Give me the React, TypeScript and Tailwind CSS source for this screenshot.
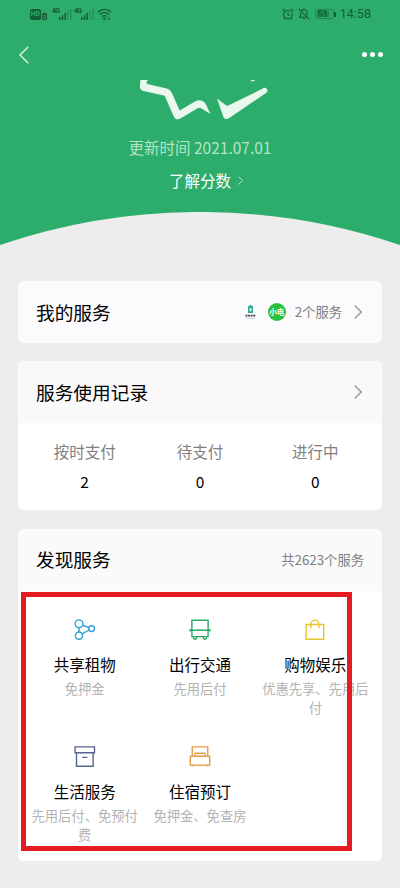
import type { ReactNode } from "react";

interface Service {
    title: string;
    desc: string;
    icon: ReactNode;
}

const RECORDS = [
    { label: "按时支付", value: 2 },
    { label: "待支付", value: 0 },
    { label: "进行中", value: 0 },
];

const SERVICES: Service[] = [
    {
        title: "共享租物",
        desc: "免押金",
        icon: (
            <svg className="w-6 h-6" viewBox="0 0 24 24" fill="none" stroke="#2f9fd8" strokeWidth="1.4">
                <circle cx="6" cy="6.8" r="3.9" />
                <circle cx="6" cy="18.6" r="3.6" />
                <circle cx="18.6" cy="11.6" r="2.9" />
                <path d="M6 10.7V15M9.6 8.3l6.3 2.2M9.1 16.8l7-3.8" />
            </svg>
        ),
    },
    {
        title: "出行交通",
        desc: "先用后付",
        icon: (
            <svg className="w-6 h-6" viewBox="0 0 24 24" fill="none" stroke="#2aa866" strokeWidth="1.4">
                <path d="M3.9 3.2h16.2v16.4H3.9zM2 13.2h20M2.2 12v2.4M21.8 12v2.4" />
                <path d="M5.4 19.6v1a1.7 1.7 0 0 0 3.4 0v-1M15.2 19.6v1a1.7 1.7 0 0 0 3.4 0v-1" />
            </svg>
        ),
    },
    {
        title: "购物娱乐",
        desc: "优惠先享、先用后付",
        icon: (
            <svg className="w-6 h-6" viewBox="0 0 24 24" fill="none" stroke="#e8c52e" strokeWidth="1.4">
                <path d="M3.1 7.5h17.6v14.7H3.1zM7.9 11.2V7.1a4 4 0 0 1 8 0v4.1" />
            </svg>
        ),
    },
    {
        title: "生活服务",
        desc: "先用后付、免预付费",
        icon: (
            <svg className="w-6 h-6" viewBox="0 0 24 24" fill="none" stroke="#56648f" strokeWidth="1.4">
                <path d="M2.1 2.9h19.4v5.8H2.1zM3.5 8.7h16.6v13.6H3.5zM9.3 13.4h5" />
            </svg>
        ),
    },
    {
        title: "住宿预订",
        desc: "免押金、免查房",
        icon: (
            <svg className="w-6 h-6" viewBox="0 0 24 24" fill="none" stroke="#e3a04e" strokeWidth="1.4">
                <path d="M4.3 12.2V2.9h15.4v9.3M2.3 12.2h19.4v9H2.3zM7 12.2V9.3h10v2.9M4.4 21.2v1.4M19.6 21.2v1.4" />
            </svg>
        ),
    },
];

function Signal() {
    return (
        <div className="flex items-start">
            <span className="-mt-px w-[7px] text-[7px] leading-[8px] font-bold tracking-[-0.8px] font-['Roboto',sans-serif]">4G</span>
            <svg className="w-[13px] h-[12px]" viewBox="0 0 13 12" fill="currentColor">
                <path d="M0 9h1.5v3H0zM2.7 7.2h1.5V12H2.7zM5.4 5h1.5v7H5.4z" />
                <path d="M8.3 2.8h1.4V12H8.3zM11.2 1h1.4v11h-1.4z" opacity=".35" />
            </svg>
        </div>
    );
}

function StatusBar() {
    return (
        <div className="h-7 pl-[30px] pr-[29px] flex items-center justify-between text-[#145e38]">
            <div className="flex items-center">
                <span className="w-[11px] h-[11px] rounded-[2px] bg-[#145e38] text-[#2dad6b] text-[7px] leading-[11px] font-bold text-center font-['Roboto',sans-serif]">
                    HD
                </span>
                <span className="ml-px mt-1 w-[5px] h-[7px] rounded-[1px] bg-[#145e38] text-[#2dad6b] text-[6px] leading-[7px] font-bold text-center font-['Roboto',sans-serif]">
                    2
                </span>
                <div className="ml-[5px] flex gap-[2px]">
                    <Signal />
                    <Signal />
                </div>
                <svg className="ml-[3px] w-[15px] h-3" viewBox="0 0 15 12" fill="none" stroke="currentColor" strokeWidth="1.3">
                    <path d="M.8 4.2a9.5 9.5 0 0 1 13.4 0M2.9 6.5a6.5 6.5 0 0 1 9.2 0M5 8.7a3.5 3.5 0 0 1 5 0" />
                    <circle cx="7.3" cy="10.7" r=".6" fill="currentColor" />
                    <path d="M12 9v2.5M10.8 10.5 12 11.7l1.2-1.2" strokeWidth=".8" />
                </svg>
            </div>
            <div className="flex items-center">
                <svg className="w-3 h-3" viewBox="0 0 12 12" fill="none" stroke="currentColor" strokeWidth="1.1">
                    <circle cx="6" cy="6.6" r="4.3" />
                    <path d="M6 4.2v2.6l1.8 1M.6 2.7 2.8.9M11.4 2.7 9.2.9M2.9 10l-1.1 1.4M9.1 10l1.1 1.4" />
                </svg>
                <svg className="ml-1 w-3 h-3" viewBox="0 0 12 12" fill="none" stroke="currentColor" strokeWidth="1.1">
                    <path d="M3.5 2.8A3 3 0 0 1 9 4.2v3.2M2.6 4.4v3.3L1.5 9.2h7.7M6 .4v.9M5 10.8h2M.8.8l10.4 10.6" />
                </svg>
                <div className="ml-[5px] w-[19px] h-[10px] rounded-[3px] border border-[#22864f] p-px flex">
                    <span className="w-3 h-[6px] bg-[#22864f] text-[9px] leading-[6px] text-center font-bold font-['Roboto',sans-serif] text-[#145e38]">
                        51
                    </span>
                </div>
                <span className="w-[2px] h-[5px] bg-[#145e38]" />
                <span className="ml-1 text-[12.6px] leading-none font-['Roboto',sans-serif]">14:58</span>
            </div>
        </div>
    );
}

function Chevron({ className }: { className: string }) {
    return (
        <svg className={className} viewBox="0 0 8 14" fill="none" stroke="currentColor" strokeWidth="1.4">
            <path d="M.7.5 7.2 7 .7 13.5" />
        </svg>
    );
}

function Header() {
    return (
        <header className="h-[245px] flex flex-col bg-[#2dad6b]">
            <StatusBar />
            <nav className="h-[52px] pl-[19px] pr-[17px] flex items-center justify-between text-white">
                <svg className="mt-px w-[10px] h-[18px]" viewBox="0 0 10 18" fill="none" stroke="#e2f5ea" strokeWidth="1.4">
                    <path d="M9.3.7 1 9l8.3 8.3" />
                </svg>
                <div className="mt-px flex gap-[3px]">
                    <span className="w-[5px] h-[5px] rounded-full bg-white" />
                    <span className="w-[5px] h-[5px] rounded-full bg-white" />
                    <span className="w-[5px] h-[5px] rounded-full bg-white" />
                </div>
            </nav>
            {/* Lower half of the score digits */}
            <svg className="h-[40px] w-[130px] ml-[139px]" viewBox="0 0 130 40" fill="#e9f7ef">
                <path d="M1.5 0h7.8C7.6 1.2 7 3 8.2 4L27.6 8.4c2.6.7 4.1 2 5.1 4.2l8 18L57.2 20.8c3.6-1.6 8.4.2 9.8 3.6l4.4 9.6-8.8-5.6c-1.3-.8-2.6-.8-4-.1L41.4 38.6c-2.8 1.5-5.4.7-6.6-2.2L25.7 15.8 4.4 11C1.7 10.3.6 8.2.9 5.4z" />
                <path d="M78 18.4 86.6 25c1.1.8 2 .9 3.2.3L124.7 8.1c3-1.3 5.1 2.9 2.6 4.7L89.9 38.3c-2.2 1.4-4.4 1-5.5-1.2z" />
                <path d="M111.3 1.6 112.8 0h3.4L115 1z" />
            </svg>
            <p className="mt-4 text-center text-[15.5px] leading-[22px] text-[#b4e3c9]">更新时间 2021.07.01</p>
            <div className="mt-[11px] pl-[12px] flex items-center justify-center gap-[7px] text-[15.5px] leading-[22px] text-white">
                了解分数
                <Chevron className="w-[5px] h-[9px] text-[#c4e9d4]" />
            </div>
            <svg className="mt-auto w-[400px] h-[33px] block shrink-0" viewBox="0 0 400 33" fill="#ededed">
                <path d="M0 33A622 622 0 0 1 400 33z" />
            </svg>
        </header>
    );
}

export default function App() {
    return (
        <div className="w-[400px] h-[888px] overflow-hidden bg-[#ededed] font-['Noto_Sans_CJK_SC',sans-serif] font-normal text-black">
            <Header />
            <main className="px-[18px] pt-9 flex flex-col">
                {/* My services */}
                <section className="h-[62px] rounded-[6px] bg-[#fbfafd] pl-[18px] pr-5 flex items-center">
                    <h2 className="text-[18.7px] leading-7">我的服务</h2>
                    <div className="ml-auto flex items-center">
                        <svg className="w-[11px] h-[14px]" viewBox="0 0 11 14">
                            <path d="M3 1.2h1.3V0h2.4v1.2H8V8H3z" fill="#31a797" />
                            <path d="M4.5 3h2v3.2h-2z" fill="#d6efeb" />
                            <path d="M.5 10.7h10" stroke="#444" strokeWidth="1.8" strokeDasharray="2 .6" />
                            <path d="M1 13.2h9" stroke="#aaa" strokeWidth=".6" />
                        </svg>
                        <span className="ml-3 w-[18px] h-[18px] rounded-full bg-[#27c13d] text-white text-[7.5px] leading-[18px] font-bold text-center whitespace-nowrap">
                            小电
                        </span>
                        <span className="ml-[9px] text-[13.3px] leading-5 text-[#808080]">2个服务</span>
                        <Chevron className="ml-3 w-2 h-[14px] text-[#999]" />
                    </div>
                </section>

                {/* Usage records */}
                <section className="mt-[18px] h-[149px] rounded-[6px] bg-white overflow-hidden">
                    <div className="h-[62px] bg-[#f9f9f9] pl-[18px] pr-5 flex items-center justify-between">
                        <h2 className="text-[18.7px] leading-7">服务使用记录</h2>
                        <Chevron className="w-2 h-[14px] text-[#999]" />
                    </div>
                    <div className="px-[9px] pt-[17px] grid grid-cols-3 text-center">
                        {RECORDS.map((item) => (
                            <div key={item.label}>
                                <p className="text-[15.5px] leading-[22px] text-[#808080]">{item.label}</p>
                                <p className="mt-2 text-[15.5px] leading-[22px]">{item.value}</p>
                            </div>
                        ))}
                    </div>
                </section>

                {/* Discover */}
                <section className="relative mt-[19px] h-[332px] rounded-[6px] bg-white">
                    <div className="h-[62px] rounded-t-[6px] bg-[#fafafa] px-[18px] flex items-center justify-between">
                        <h2 className="pb-[2px] text-[18.7px] leading-7">发现服务</h2>
                        <span className="text-[13.3px] leading-5 text-[#808080]">共2623个服务</span>
                    </div>
                    <div className="px-[9px] pt-[26px] grid grid-cols-3 auto-rows-[127px]">
                        {SERVICES.map((item) => (
                            <div key={item.title} className="flex flex-col items-center text-center">
                                {item.icon}
                                <h3 className="mt-3 text-[15.5px] leading-[22px]">{item.title}</h3>
                                <p className="mt-[4px] w-[110px] text-[13.3px] leading-[19px] text-[#b3b3b3]">{item.desc}</p>
                            </div>
                        ))}
                    </div>
                    {/* Highlight frame */}
                    <div className="absolute left-[3px] top-[63px] w-[331px] h-[259px] border-[5px] border-[#e51c23]" />
                </section>
            </main>
        </div>
    );
}
